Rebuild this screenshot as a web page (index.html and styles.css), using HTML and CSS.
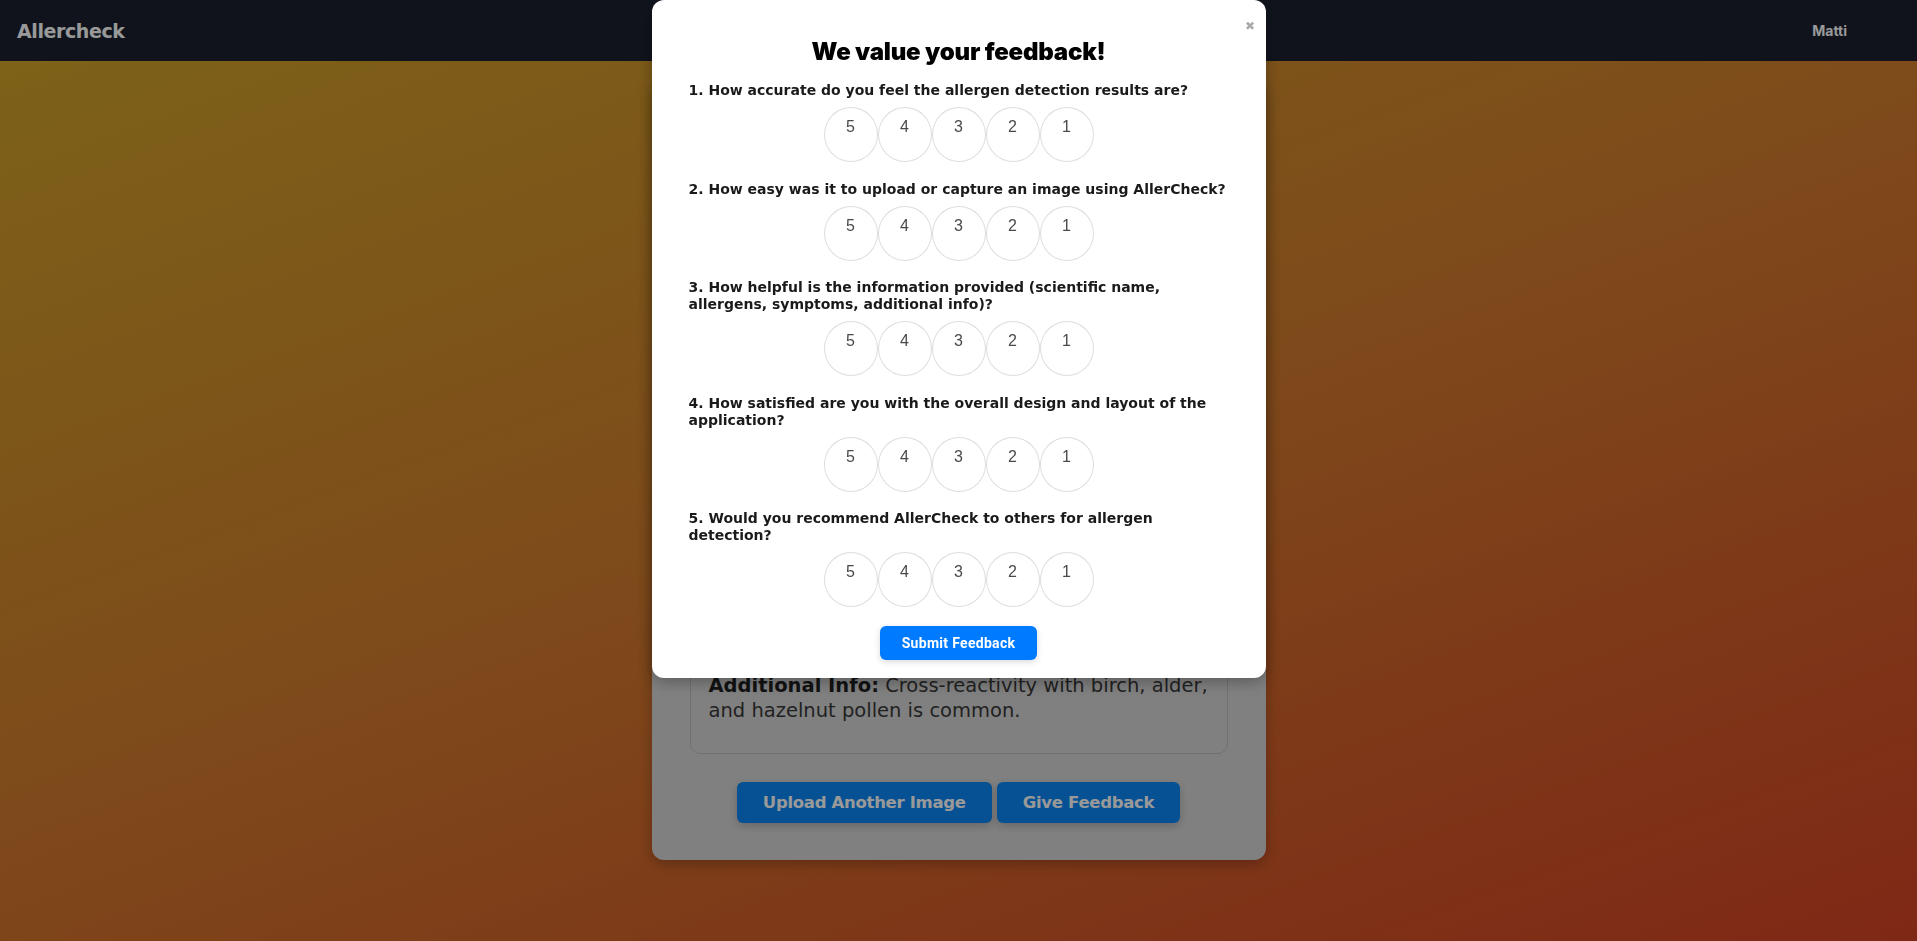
FILE: index.html
```html
<!DOCTYPE html>
<html lang="en">
<head>
<meta charset="utf-8">
<title>Allercheck</title>
<link rel="stylesheet" href="styles.css">
</head>
<body>
<nav class="navbar">
  <a class="logo" href="#">Allercheck</a>
  <div class="user">Matti</div>
</nav>

<main class="main">
  <section class="card">
    <h2 class="card-title">Analysis Results</h2>
    <div class="preview"></div>
    <div class="info-box">
      <p><strong>Plant:</strong> Apple</p>
      <p><strong>Scientific Name:</strong> Malus domestica</p>
      <p><strong>Allergens:</strong> Mal d 1, Mal d 3 proteins found in the fruit and its peel.</p>
      <p><strong>Additional Info:</strong> Cross-reactivity with birch, alder, and hazelnut pollen is common.</p>
    </div>
    <div class="actions">
      <button class="btn">Upload Another Image</button>
      <button class="btn">Give Feedback</button>
    </div>
  </section>
</main>

<div class="overlay">
  <div class="modal">
    <button class="close">&#10006;</button>
    <h2 class="modal-title">We value your feedback!</h2>
    <form class="form">
      <div class="question">
        <p class="q-text">1. How accurate do you feel the allergen detection results are?</p>
        <div class="rating">
          <label class="rate">5</label><label class="rate">4</label><label class="rate">3</label><label class="rate">2</label><label class="rate">1</label>
        </div>
      </div>
      <div class="question">
        <p class="q-text">2. How easy was it to upload or capture an image using AllerCheck?</p>
        <div class="rating">
          <label class="rate">5</label><label class="rate">4</label><label class="rate">3</label><label class="rate">2</label><label class="rate">1</label>
        </div>
      </div>
      <div class="question">
        <p class="q-text">3. How helpful is the information provided (scientific name, allergens, symptoms, additional info)?</p>
        <div class="rating">
          <label class="rate">5</label><label class="rate">4</label><label class="rate">3</label><label class="rate">2</label><label class="rate">1</label>
        </div>
      </div>
      <div class="question">
        <p class="q-text">4. How satisfied are you with the overall design and layout of the application?</p>
        <div class="rating">
          <label class="rate">5</label><label class="rate">4</label><label class="rate">3</label><label class="rate">2</label><label class="rate">1</label>
        </div>
      </div>
      <div class="question">
        <p class="q-text">5. Would you recommend AllerCheck to others for allergen detection?</p>
        <div class="rating">
          <label class="rate">5</label><label class="rate">4</label><label class="rate">3</label><label class="rate">2</label><label class="rate">1</label>
        </div>
      </div>
      <div class="submit-row">
        <button type="button" class="submit">Submit Feedback</button>
      </div>
    </form>
  </div>
</div>
</body>
</html>
```

FILE: styles.css
```css
* { box-sizing: border-box; }

html, body {
  margin: 0;
  padding: 0;
  height: 100%;
}

body {
  font-family: "DejaVu Sans", Inter, "Liberation Sans", Arial, sans-serif;
  background: linear-gradient(160deg, #d0a728 0%, #d27b2d 50%, #d44325 100%);
  min-height: 941px;
  overflow: hidden;
}

.navbar {
  height: 61px;
  background: #1b2130;
  display: flex;
  align-items: center;
  justify-content: space-between;
  padding: 0 70px 0 17px;
}

.logo {
  color: #ffffff;
  font-family: "DejaVu Sans", sans-serif;
  font-weight: 700;
  font-size: 19px;
  letter-spacing: -0.4px;
  text-decoration: none;
}

.user {
  color: #ffffff;
  font-family: Inter, "Liberation Sans", sans-serif;
  font-weight: 700;
  font-size: 14px;
}

.main {
  display: flex;
  justify-content: center;
  padding-top: 20px;
}

.card {
  width: 614px;
  background: #d6d6d6;
  border-radius: 12px;
  padding: 38px 38px 37px;
  box-shadow: 0 4px 14px rgba(0, 0, 0, 0.25);
}

.card-title {
  margin: 0 0 16px;
  font-size: 24px;
  line-height: 30px;
  text-align: center;
}

.preview {
  height: 338px;
  margin-bottom: 20px;
  border-radius: 8px;
  background: #bbb;
}

.info-box {
  border: 1px solid #bdbdbd;
  border-radius: 10px;
  padding: 16px 16px 30px 18px;
}

.info-box p {
  margin: 0 0 12px;
  font-size: 19.5px;
  line-height: 24.5px;
  color: #383838;
}

.info-box p:last-child { margin-bottom: 0; }

.info-box strong {
  color: #1e1e1e;
  font-weight: 700;
}

.actions {
  display: flex;
  justify-content: center;
  gap: 5px;
  margin-top: 28px;
}

.btn {
  height: 41px;
  padding: 0 26px;
  border: none;
  border-radius: 6px;
  background: #0a88f6;
  color: #ffffff;
  font-family: "DejaVu Sans", sans-serif;
  font-size: 16.5px;
  font-weight: 700;
  letter-spacing: -0.3px;
  box-shadow: 0 3px 8px rgba(0, 0, 0, 0.2);
}

.overlay {
  position: fixed;
  inset: 0;
  background: rgba(0, 0, 0, 0.4);
  display: flex;
  justify-content: center;
  align-items: flex-start;
}

.modal {
  position: relative;
  width: 614px;
  background: #ffffff;
  border-radius: 12px;
  padding: 20px 37px 18px;
  box-shadow: 0 4px 16px rgba(0, 0, 0, 0.3);
}

.close {
  position: absolute;
  top: 19px;
  right: 11px;
  border: none;
  background: none;
  color: #aaaaaa;
  font-size: 12px;
  padding: 0;
  cursor: pointer;
}

.modal-title {
  margin: 17px 0 15px;
  text-align: center;
  font-family: Inter, "Liberation Sans", sans-serif;
  font-size: 24px;
  line-height: 30px;
  font-weight: 900;
  color: #000;
  letter-spacing: -0.2px;
}

.form {
  display: flex;
  flex-direction: column;
}

.question {
  margin-bottom: 18.5px;
}

.q-text {
  margin: 0;
  font-family: "DejaVu Sans", sans-serif;
  font-size: 14px;
  line-height: 17px;
  font-weight: 700;
  color: #1a1a1a;
}

.rating {
  display: flex;
  justify-content: center;
  margin-top: 8px;
}

.rate {
  width: 54px;
  height: 55px;
  border: 1px solid #dddddd;
  border-radius: 50%;
  display: flex;
  justify-content: center;
  padding-top: 10px;
  font-family: "Liberation Sans", Arial, sans-serif;
  font-size: 16px;
  line-height: 18px;
  color: #4a4a4a;
  cursor: pointer;
}

.submit-row {
  display: flex;
  justify-content: center;
}

.submit {
  width: 157px;
  height: 34px;
  border: none;
  border-radius: 6px;
  background: #007bff;
  color: #ffffff;
  font-family: Roboto, "Liberation Sans", Arial, sans-serif;
  font-size: 14px;
  font-weight: 700;
  letter-spacing: 0.3px;
  box-shadow: 0 2px 6px rgba(0, 0, 0, 0.15);
}
```
